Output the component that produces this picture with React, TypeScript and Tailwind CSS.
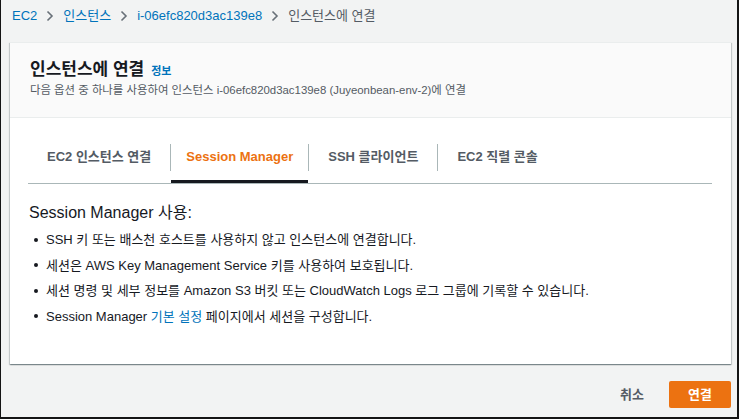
import React from "react";

const font = {
  fontFamily: '"Liberation Sans", "Noto Sans CJK KR", Arial, sans-serif',
};

function Chevron() {
  return (
    <svg width="8" height="12" viewBox="0 0 8 12" className="mx-[9px]">
      <path d="M1.5 1.5 L6 6 L1.5 10.5" fill="none" stroke="#687078" strokeWidth="1.6" />
    </svg>
  );
}

export default function App() {
  const tabs = ["EC2 인스턴스 연결", "Session Manager", "SSH 클라이언트", "EC2 직렬 콘솔"];
  return (
    <div
      style={font}
      className="w-[739px] h-[419px] bg-[#f2f3f3] border-l border-r-2 border-b-2 border-[#141414] overflow-hidden text-[#16191f]"
    >
      {/* breadcrumb */}
      <div className="h-[42px] pt-[7px] pl-[11px] flex items-start text-[13px] leading-[18px]">
        <span className="text-[#0073bb]">EC2</span>
        <span className="h-[18px] flex items-center"><Chevron /></span>
        <span className="text-[#0073bb]">인스턴스</span>
        <span className="h-[18px] flex items-center"><Chevron /></span>
        <span className="text-[#0073bb]">i-06efc820d3ac139e8</span>
        <span className="h-[18px] flex items-center"><Chevron /></span>
        <span className="text-[#545b64]">인스턴스에 연결</span>
      </div>

      {/* card */}
      <div className="ml-[9px] w-[721px] h-[322px] bg-white border-t border-[#eaeded] shadow-[0_1px_1px_0_rgba(0,28,36,0.3),1px_1px_1px_0_rgba(0,28,36,0.15),-1px_1px_1px_0_rgba(0,28,36,0.15)] flex flex-col">
        <div className="bg-[#fafafa] border-b border-[#eaeded] pl-[20px] pt-[16px] pb-[19px]">
          <div className="flex items-baseline leading-[22px]">
            <span className="text-[17px] font-bold text-[#16191f]">인스턴스에 연결</span>
            <span className="ml-[7px] text-[11px] font-bold text-[#0073bb]">정보</span>
          </div>
          <div className="text-[11.4px] leading-[16px] text-[#545b64]">
            다음 옵션 중 하나를 사용하여 인스턴스 i-06efc820d3ac139e8 (Juyeonbean-env-2)에 연결
          </div>
        </div>

        <div className="px-[18px] pt-[19px]">
          <div className="flex border-b border-[#aab7b8] w-[684px]">
            {tabs.map((t, i) => (
              <React.Fragment key={t}>
                {i > 0 && <div className="w-px h-[27px] mt-[7px] bg-[#aab7b8]" />}
                <div
                  className={
                    i === 1
                      ? "h-[46px] pt-[11px] px-[15px] text-[13px] leading-[18px] font-bold text-[#ec7211] shadow-[inset_0_-3px_0_#16191f]"
                      : "h-[46px] pt-[11px] px-[19px] text-[13px] leading-[18px] font-bold text-[#545b64]"
                  }
                >
                  {t}
                </div>
              </React.Fragment>
            ))}
          </div>

          <div className="mt-[18px] pl-[1px] text-[16px] leading-[22px]">Session Manager 사용:</div>
          <ul className="mt-[3px] pl-[6px] text-[13px] leading-[25.5px]">
            {[
              <>SSH 키 또는 배스천 호스트를 사용하지 않고 인스턴스에 연결합니다.</>,
              <>세션은 AWS Key Management Service 키를 사용하여 보호됩니다.</>,
              <>세션 명령 및 세부 정보를 Amazon S3 버킷 또는 CloudWatch Logs 로그 그룹에 기록할 수 있습니다.</>,
              <>
                Session Manager <span className="text-[#0073bb]">기본 설정</span> 페이지에서 세션을 구성합니다.
              </>,
            ].map((c, i) => (
              <li key={i} className="flex items-center">
                <span className="w-[4px] h-[4px] rounded-full bg-[#16191f] mr-[8px]" />
                <span>{c}</span>
              </li>
            ))}
          </ul>
        </div>
      </div>

      {/* footer */}
      <div className="mt-[17px] flex justify-end items-center pr-[6px]">
        <button className="h-[27px] px-[20px] text-[13px] font-bold text-[#545b64]">취소</button>
        <button className="ml-[5px] h-[27px] w-[62px] rounded-[2px] bg-[#ec7211] text-white text-[13px] font-bold">
          연결
        </button>
      </div>
    </div>
  );
}
